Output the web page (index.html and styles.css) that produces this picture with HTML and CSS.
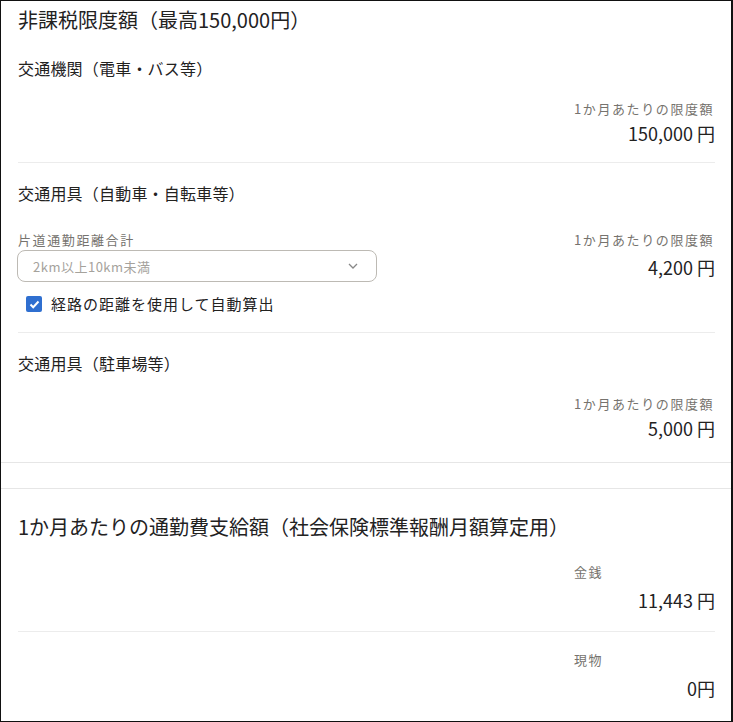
FILE: index.html
```html
<!DOCTYPE html>
<html lang="ja">
  <head>
    <meta charset="UTF-8" />
    <meta name="viewport" content="width=device-width, initial-scale=1.0" />
    <title>通勤手当 - 非課税限度額</title>
    <link rel="stylesheet" href="styles.css">
  </head>
  <body>
    <div class="frame">
      <section class="card">
        <h2 class="card-title">非課税限度額（最高150,000円）</h2>

        <div class="item">
          <h3 class="item-title">交通機関（電車・バス等）</h3>
          <div class="item-row">
            <div class="item-main"></div>
            <div class="amount">
              <div class="amount-label">1か月あたりの限度額</div>
              <div class="amount-value">150,000<span class="yen">円</span></div>
            </div>
          </div>
        </div>

        <div class="item">
          <h3 class="item-title">交通用具（自動車・自転車等）</h3>
          <div class="item-row item-row-form">
            <div class="item-main">
              <label class="field-label" for="distance">片道通勤距離合計</label>
              <div class="select">
                <span class="select-text">2km以上10km未満</span>
                <svg class="select-arrow" width="10" height="6" viewBox="0 0 10 6">
                  <polyline points="1,1 5,5 9,1" fill="none" stroke="#888" stroke-width="1.3" />
                </svg>
              </div>
              <label class="check">
                <span class="check-box">
                  <svg width="11" height="9" viewBox="0 0 11 9">
                    <polyline points="1.5,4.5 4.2,7.2 9.5,1.5" fill="none" stroke="#fff" stroke-width="2" />
                  </svg>
                </span>
                経路の距離を使用して自動算出
              </label>
            </div>
            <div class="amount">
              <div class="amount-label">1か月あたりの限度額</div>
              <div class="amount-value">4,200<span class="yen">円</span></div>
            </div>
          </div>
        </div>

        <div class="item">
          <h3 class="item-title">交通用具（駐車場等）</h3>
          <div class="item-row">
            <div class="item-main"></div>
            <div class="amount">
              <div class="amount-label">1か月あたりの限度額</div>
              <div class="amount-value">5,000<span class="yen">円</span></div>
            </div>
          </div>
        </div>
      </section>

      <section class="card card-pay">
        <h2 class="card-title">1か月あたりの通勤費支給額（社会保険標準報酬月額算定用）</h2>

        <div class="item item-plain">
          <div class="item-row">
            <div class="item-main"></div>
            <div class="amount">
              <div class="amount-label">金銭</div>
              <div class="amount-value">11,443<span class="yen">円</span></div>
            </div>
          </div>
        </div>

        <div class="item item-plain">
          <div class="item-row">
            <div class="item-main"></div>
            <div class="amount">
              <div class="amount-label">現物</div>
              <div class="amount-value">0円</div>
            </div>
          </div>
        </div>
      </section>
    </div>
  </body>
</html>
```

FILE: styles.css
```css
* {
  box-sizing: border-box;
}

body {
  margin: 0;
  font-family: "Noto Sans CJK JP", "Noto Sans", sans-serif;
  color: #23221f;
  background: #fff;
}

.frame {
  height: 722px;
  border: 1px solid #111;
  border-right-width: 2px;
  overflow: hidden;
}

.card {
  padding: 5px 16px 0 17px;
  border-bottom: 1px solid #e6e6e6;
}

.card-pay {
  margin-top: 25px;
  padding-top: 24px;
  border-top: 1px solid #e6e6e6;
  border-bottom: none;
}

.card-title {
  margin: 0;
  font-size: 20px;
  font-weight: normal;
  line-height: 28px;
}

.item {
  padding: 18px 0 16px;
  border-bottom: 1px solid #ececec;
}

.card-title + .item {
  padding-top: 22px;
}

.card .item:last-child {
  padding-bottom: 21px;
  border-bottom: none;
}

.item-title {
  margin: 0;
  font-size: 16px;
  font-weight: normal;
  line-height: 24px;
  letter-spacing: 0.2px;
}

.item-row {
  display: grid;
  grid-template-columns: 1fr 141px;
  margin-top: 19px;
}

.item-row-form {
  margin-top: 25px;
}

.item-plain .item-row {
  margin-top: 0;
}

.card .item-plain {
  padding-bottom: 18px;
}

.card-title + .item-plain {
  padding-top: 21px;
}

.amount-label,
.field-label {
  display: block;
  font-size: 13px;
  line-height: 20px;
  color: #76736e;
  letter-spacing: 1.6px;
  white-space: nowrap;
}

.amount-value {
  margin-top: 1px;
  font-size: 18px;
  line-height: 26px;
  text-align: right;
  white-space: nowrap;
}

.yen {
  margin-left: 4px;
}

.item-row-form .amount-value {
  margin-top: 4px;
}

.item-plain .amount-value {
  margin-top: 5px;
}

.select {
  display: flex;
  align-items: center;
  justify-content: space-between;
  width: 360px;
  height: 32px;
  padding: 0 18px 0 15px;
  border: 1px solid #bdbab4;
  border-radius: 8px;
  margin-left: -1px;
}

.select-text {
  font-size: 13px;
  color: #a5a29c;
  letter-spacing: 0.5px;
}

.check {
  display: flex;
  align-items: center;
  gap: 9px;
  margin: 10px 0 0 8px;
  font-size: 15px;
  line-height: 24px;
  letter-spacing: 1px;
}

.check-box {
  display: flex;
  align-items: center;
  justify-content: center;
  width: 16px;
  height: 16px;
  border-radius: 2px;
  background: #2f6fd0;
}
```
